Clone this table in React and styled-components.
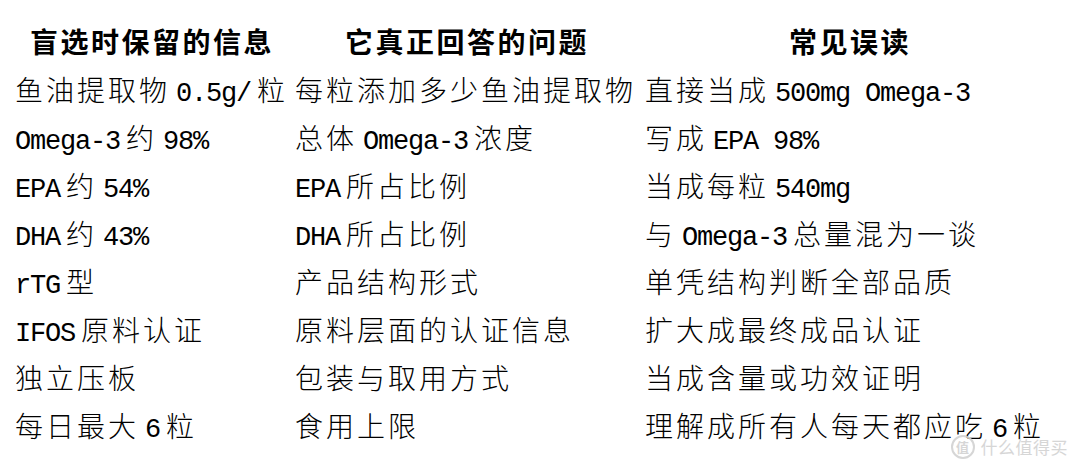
import styled, { createGlobalStyle } from "styled-components";

const GlobalStyle = createGlobalStyle`
  html, body {
    margin: 0;
    padding: 0;
    background: #ffffff;
  }
`;

const Page = styled.div`
  position: relative;
  box-sizing: border-box;
  width: 1080px;
  height: 468px;
  padding: 17px 0 0 12px;
  overflow: hidden;
  background: #ffffff;
  font-family: "Noto Sans CJK SC", "Noto Sans", sans-serif;
  color: #000000;
`;

const Table = styled.div`
  display: grid;
  grid-template-columns: 280px 350px 416px;
  grid-auto-rows: 48px;
`;

const HeadCell = styled.div`
  text-align: center;
  font-size: 28px;
  font-weight: 700;
  letter-spacing: 2.5px;
  line-height: 48px;
  white-space: nowrap;
`;

const Cell = styled.div`
  padding-left: 3px;
  font-size: 28px;
  font-weight: 300;
  letter-spacing: 3px;
  line-height: 48px;
  white-space: nowrap;
`;

const Latin = styled.span`
  font-family: "Liberation Mono", "DejaVu Sans Mono", monospace;
  font-size: 27px;
  font-weight: 400;
  letter-spacing: -1.2px;
  white-space: pre;
  margin: 0 6px;

  &:first-child {
    margin-left: 0;
  }
  &:last-child {
    margin-right: 0;
  }
`;

const Watermark = styled.div`
  position: absolute;
  right: 12px;
  bottom: 9px;
  display: flex;
  align-items: center;
  gap: 6px;
  color: #d2d2d2;
  opacity: 0.9;
  text-shadow: 0 0 2px #ffffff;
`;

const Badge = styled.span`
  display: flex;
  align-items: center;
  justify-content: center;
  width: 20px;
  height: 20px;
  border: 2px solid #d2d2d2;
  border-radius: 50%;
  font-size: 13px;
  font-weight: 700;
  line-height: 1;
`;

const Brand = styled.span`
  font-size: 17px;
  letter-spacing: 0.5px;
`;

const headers = ["盲选时保留的信息", "它真正回答的问题", "常见误读"];

const rows = [
  ["鱼油提取物 0.5g/粒", "每粒添加多少鱼油提取物", "直接当成 500mg Omega-3"],
  ["Omega-3 约 98%", "总体 Omega-3 浓度", "写成 EPA 98%"],
  ["EPA 约 54%", "EPA 所占比例", "当成每粒 540mg"],
  ["DHA 约 43%", "DHA 所占比例", "与 Omega-3 总量混为一谈"],
  ["rTG 型", "产品结构形式", "单凭结构判断全部品质"],
  ["IFOS 原料认证", "原料层面的认证信息", "扩大成最终成品认证"],
  ["独立压板", "包装与取用方式", "当成含量或功效证明"],
  ["每日最大 6 粒", "食用上限", "理解成所有人每天都应吃 6 粒"],
];

// split mixed text into CJK runs and half-width Latin runs
function renderText(text) {
  return text
    .split(/([\x20-\x7E]+)/)
    .map((part) => (/^[\x20-\x7E]+$/.test(part) ? part.trim() : part))
    .filter((part) => part.length > 0)
    .map((part, i) =>
      /^[\x20-\x7E]+$/.test(part) ? <Latin key={i}>{part}</Latin> : <span key={i}>{part}</span>
    );
}

export default function App() {
  return (
    <>
      <GlobalStyle />
      <Page>
        <Table>
          {headers.map((h) => (
            <HeadCell key={h}>{h}</HeadCell>
          ))}
          {rows.map((row, r) =>
            row.map((text, c) => <Cell key={`${r}-${c}`}>{renderText(text)}</Cell>)
          )}
        </Table>
        <Watermark>
          <Badge>值</Badge>
          <Brand>什么值得买</Brand>
        </Watermark>
      </Page>
    </>
  );
}
